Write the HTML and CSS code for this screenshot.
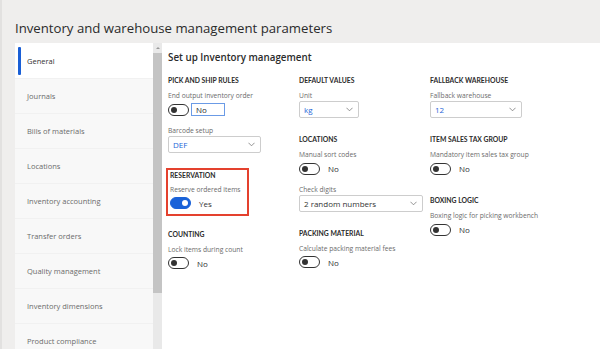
FILE: index.html
```html
<!DOCTYPE html>
<html lang="en">

<head>
  <meta charset="UTF-8">
  <meta name="viewport" content="width=device-width, initial-scale=1.0">
  <link rel="stylesheet" href="styles.css">
  <title>Inventory and warehouse management parameters</title>
</head>

<body>
  <div class="page">
    <h1 class="title">Inventory and warehouse management parameters</h1>

    <div class="content">
      <nav class="nav">
        <div class="nav-list">
          <div class="nav-item active"><span class="nav-bar"></span>General</div>
          <div class="nav-item">Journals</div>
          <div class="nav-item">Bills of materials</div>
          <div class="nav-item">Locations</div>
          <div class="nav-item">Inventory accounting</div>
          <div class="nav-item">Transfer orders</div>
          <div class="nav-item">Quality management</div>
          <div class="nav-item">Inventory dimensions</div>
          <div class="nav-item">Product compliance</div>
        </div>
        <div class="scrollbar">
          <div class="scroll-arrow"></div>
          <div class="scroll-thumb"></div>
        </div>
      </nav>

      <main class="panel">
        <h2 class="panel-title">Set up Inventory management</h2>

        <div class="columns">
          <!-- column 1 -->
          <div class="col">
            <div class="group">
              <div class="group-head">PICK AND SHIP RULES</div>
              <div class="field">
                <div class="field-label">End output inventory order</div>
                <div class="toggle-row">
                  <span class="toggle"><span class="dot"></span></span>
                  <span class="value-box">No</span>
                </div>
              </div>
              <div class="field">
                <div class="field-label">Barcode setup</div>
                <div class="select w-def">
                  <span class="select-value">DEF</span>
                  <svg class="chevron" viewBox="0 0 8 5"><polyline points="0.5,0.5 4,4 7.5,0.5" /></svg>
                </div>
              </div>
            </div>

            <div class="group highlight">
              <div class="group-head">RESERVATION</div>
              <div class="field">
                <div class="field-label">Reserve ordered items</div>
                <div class="toggle-row">
                  <span class="toggle on"><span class="dot"></span></span>
                  <span class="toggle-text">Yes</span>
                </div>
              </div>
            </div>

            <div class="group counting">
              <div class="group-head">COUNTING</div>
              <div class="field">
                <div class="field-label">Lock items during count</div>
                <div class="toggle-row">
                  <span class="toggle"><span class="dot"></span></span>
                  <span class="toggle-text">No</span>
                </div>
              </div>
            </div>
          </div>

          <!-- column 2 -->
          <div class="col">
            <div class="group">
              <div class="group-head">DEFAULT VALUES</div>
              <div class="field">
                <div class="field-label">Unit</div>
                <div class="select w-unit">
                  <span class="select-value">kg</span>
                  <svg class="chevron" viewBox="0 0 8 5"><polyline points="0.5,0.5 4,4 7.5,0.5" /></svg>
                </div>
              </div>
            </div>

            <div class="group">
              <div class="group-head">LOCATIONS</div>
              <div class="field">
                <div class="field-label">Manual sort codes</div>
                <div class="toggle-row">
                  <span class="toggle"><span class="dot"></span></span>
                  <span class="toggle-text">No</span>
                </div>
              </div>
              <div class="field">
                <div class="field-label">Check digits</div>
                <div class="select w-check">
                  <span class="select-value plain">2 random numbers</span>
                  <svg class="chevron" viewBox="0 0 8 5"><polyline points="0.5,0.5 4,4 7.5,0.5" /></svg>
                </div>
              </div>
            </div>

            <div class="group">
              <div class="group-head">PACKING MATERIAL</div>
              <div class="field">
                <div class="field-label">Calculate packing material fees</div>
                <div class="toggle-row">
                  <span class="toggle"><span class="dot"></span></span>
                  <span class="toggle-text">No</span>
                </div>
              </div>
            </div>
          </div>

          <!-- column 3 -->
          <div class="col">
            <div class="group">
              <div class="group-head">FALLBACK WAREHOUSE</div>
              <div class="field">
                <div class="field-label">Fallback warehouse</div>
                <div class="select w-wh">
                  <span class="select-value">12</span>
                  <svg class="chevron" viewBox="0 0 8 5"><polyline points="0.5,0.5 4,4 7.5,0.5" /></svg>
                </div>
              </div>
            </div>

            <div class="group">
              <div class="group-head">ITEM SALES TAX GROUP</div>
              <div class="field">
                <div class="field-label">Mandatory item sales tax group</div>
                <div class="toggle-row">
                  <span class="toggle"><span class="dot"></span></span>
                  <span class="toggle-text">No</span>
                </div>
              </div>
            </div>

            <div class="group boxing">
              <div class="group-head">BOXING LOGIC</div>
              <div class="field">
                <div class="field-label">Boxing logic for picking workbench</div>
                <div class="toggle-row">
                  <span class="toggle"><span class="dot"></span></span>
                  <span class="toggle-text">No</span>
                </div>
              </div>
            </div>
          </div>
        </div>
      </main>
    </div>
  </div>
</body>

</html>
```

FILE: styles.css
```css
* {
  margin: 0;
  padding: 0;
  box-sizing: border-box;
}

html,
body {
  width: 600px;
  height: 349px;
  overflow: hidden;
}

body {
  font-family: 'Open Sans', sans-serif;
  color: #2b2b2b;
  background: #efeeed;
}

.page {
  height: 349px;
  padding: 18px 0 0 15px;
  border-left: 2px solid #e2e1e0;
}

.title {
  font-size: 13.2px;
  font-weight: 400;
  line-height: 20px;
  margin-bottom: 5px;
  margin-left: -2px;
  white-space: nowrap;
}

.content {
  display: flex;
  height: 320px;
  margin-left: -2px;
}

/* left navigation */
.nav {
  display: flex;
  width: 147px;
  flex-shrink: 0;
}

.nav-list {
  width: 138px;
  padding-top: 1px;
  background: #f8f8f8;
}

.nav-item {
  display: flex;
  align-items: center;
  height: 35px;
  padding-left: 12px;
  font-size: 7.5px;
  color: #6b6b6b;
  border-bottom: 1px solid #f1f1f1;
}

.nav-item.active {
  margin-top: -1px;
  height: 36px;
  padding-left: 3px;
  background: #fff;
  color: #333;
}

.nav-bar {
  width: 3px;
  height: 28px;
  margin-right: 6px;
  background: #1a5fd6;
  border-radius: 1px;
}

.scrollbar {
  width: 9px;
  background: #e9e9e9;
}

.scroll-arrow {
  height: 10px;
  display: flex;
  justify-content: center;
  align-items: center;
}

.scroll-arrow::before {
  content: "";
  border-left: 2px solid transparent;
  border-right: 2px solid transparent;
  border-bottom: 2px solid #9a9a9a;
}

.scroll-thumb {
  height: 240px;
  background: #c4c4c4;
}

/* main panel */
.panel {
  flex: 1;
  background: #fff;
  padding: 8px 0 0 6px;
}

.panel-title {
  font-size: 9.8px;
  font-weight: 600;
  line-height: 14px;
  white-space: nowrap;
}

.columns {
  display: grid;
  grid-template-columns: 131px 131px 1fr;
  margin-top: 10px;
}

.group + .group {
  margin-top: 16px;
}

.group.highlight {
  margin-top: 15px;
  margin-left: -2px;
  width: 83px;
  padding: 0 0 4px 2px;
  border: 2px solid #e4412e;
}

.group.counting {
  margin-top: 13px;
}

.group.boxing {
  margin-top: 20px;
}

.group-head {
  font-family: 'Lato', sans-serif;
  font-size: 6.8px;
  font-weight: 700;
  line-height: 10px;
  margin-bottom: 6px;
  white-space: nowrap;
}

.highlight .group-head {
  margin-bottom: 5px;
}

.field + .field {
  margin-top: 9.5px;
}

.field-label {
  font-size: 6.7px;
  line-height: 10px;
  color: #6b6b6b;
  white-space: nowrap;
}

.toggle-row {
  display: flex;
  align-items: center;
  height: 13px;
  margin-top: 2px;
}

.toggle {
  display: flex;
  align-items: center;
  width: 21px;
  height: 12px;
  padding: 0 2px;
  border: 1px solid #333;
  border-radius: 6px;
  background: #fff;
}

.toggle .dot {
  width: 6px;
  height: 6px;
  border-radius: 50%;
  background: #333;
}

.toggle.on {
  justify-content: flex-end;
  background: #1a62d8;
  border-color: #1a62d8;
}

.toggle.on .dot {
  background: #fff;
}

.toggle-text {
  margin-left: 8px;
  font-size: 8px;
  color: #333;
}

.value-box {
  display: flex;
  align-items: center;
  width: 34px;
  height: 13px;
  margin-left: 2px;
  padding-left: 4px;
  border: 1px solid #6b9be6;
  font-size: 8px;
}

.select {
  display: flex;
  align-items: center;
  justify-content: space-between;
  height: 17px;
  padding: 0 5px 0 4px;
  border: 1px solid #cdcdcd;
  border-radius: 2px;
}

.select-value {
  font-size: 8px;
  color: #2566d8;
}

.select-value.plain {
  color: #333;
}

.chevron {
  width: 7px;
  height: 5px;
  fill: none;
  stroke: #777;
  stroke-width: 0.9;
}

.w-def {
  width: 93px;
}

.w-unit {
  width: 60px;
}

.w-wh {
  width: 92px;
}

.w-check {
  width: 124px;
}
```
